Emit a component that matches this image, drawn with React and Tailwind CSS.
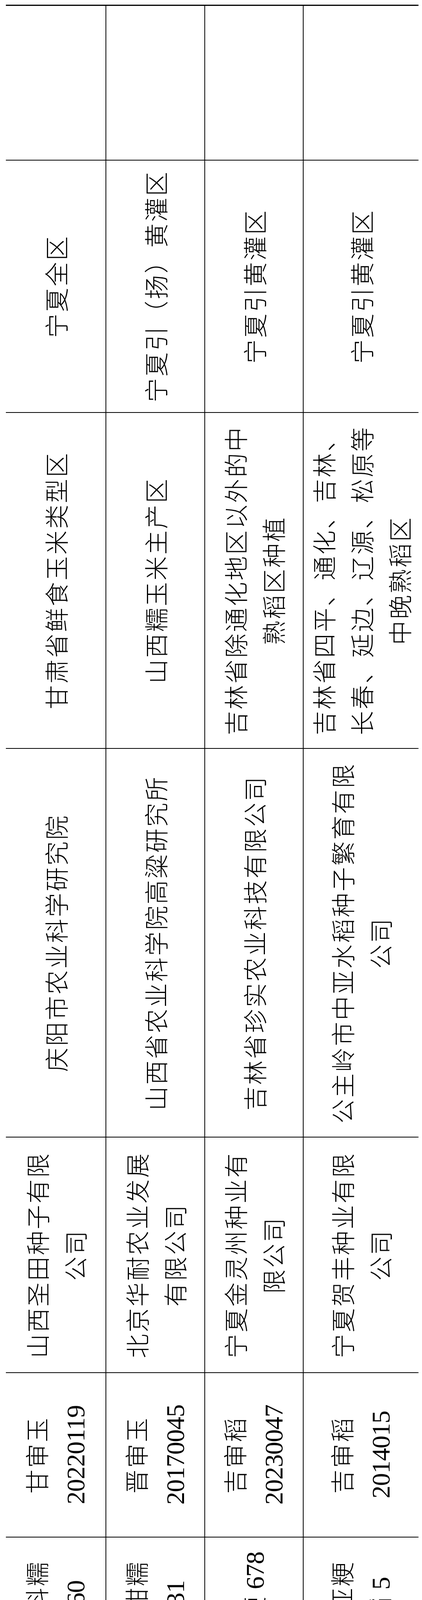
import React from "react";

const rows = [
  [
    ["64"],
    ["玉米", "（鲜食）"],
    ["庆科糯", "660"],
    ["甘审玉", "20220119"],
    ["山西圣田种子有限", "公司"],
    ["庆阳市农业科学研究院"],
    ["甘肃省鲜食玉米类型区"],
    ["宁夏全区"],
    [],
  ],
  [
    ["65"],
    ["玉米", "（鲜食）"],
    ["黑甜糯", "631"],
    ["晋审玉", "20170045"],
    ["北京华耐农业发展", "有限公司"],
    ["山西省农业科学院高粱研究所"],
    ["山西糯玉米主产区"],
    ["宁夏引（扬）黄灌区"],
    [],
  ],
  [
    ["66"],
    ["水稻"],
    ["珍粳 678"],
    ["吉审稻", "20230047"],
    ["宁夏金灵州种业有", "限公司"],
    ["吉林省珍实农业科技有限公司"],
    ["吉林省除通化地区以外的中", "熟稻区种植"],
    ["宁夏引黄灌区"],
    [],
  ],
  [
    ["67"],
    ["水稻"],
    ["中亚粳", "稻 5"],
    ["吉审稻", "2014015"],
    ["宁夏贺丰种业有限", "公司"],
    ["公主岭市中亚水稻种子繁育有限", "公司"],
    ["吉林省四平、通化、吉林、", "长春、延边、辽源、松原等", "中晚熟稻区"],
    ["宁夏引黄灌区"],
    [],
  ],
];

function Line({ text }) {
  const parts = text.split(/([0-9 ]+)/);
  return (
    <div className="whitespace-nowrap leading-[97px]">
      {parts.map((p, i) =>
        i % 2 === 1 ? (
          <span
            key={i}
            className="[font-family:'Liberation_Serif',serif] font-normal text-[66px] tracking-[-1px]"
          >
            {p}
          </span>
        ) : (
          <span key={i} className="tracking-[4px]">
            {p}
          </span>
        )
      )}
    </div>
  );
}

function Cell({ lines }) {
  return (
    <div className="bg-white flex flex-col items-center justify-center text-center overflow-hidden">
      {lines.map((l, i) => (
        <Line key={i} text={l} />
      ))}
    </div>
  );
}

export default function App() {
  return (
    <div className="w-[1080px] h-[4730px] overflow-hidden bg-white rotate-180 pl-[9px] pt-[8px] text-black [font-family:'Noto_Sans_CJK_SC',sans-serif] font-light text-[62px]">
      <div className="[writing-mode:vertical-rl] [text-orientation:sideways] grid w-max h-max grid-cols-[151px_313px_316px_419px_601px_993px_858px_644px_394px] grid-rows-[255px_251px_250px_294px] gap-[2px] bg-black px-[2px] pt-[2px] pb-[3px]">
        {rows.map((r, ri) =>
          r.map((c, ci) => <Cell key={ri + "-" + ci} lines={c} />)
        )}
      </div>
    </div>
  );
}
